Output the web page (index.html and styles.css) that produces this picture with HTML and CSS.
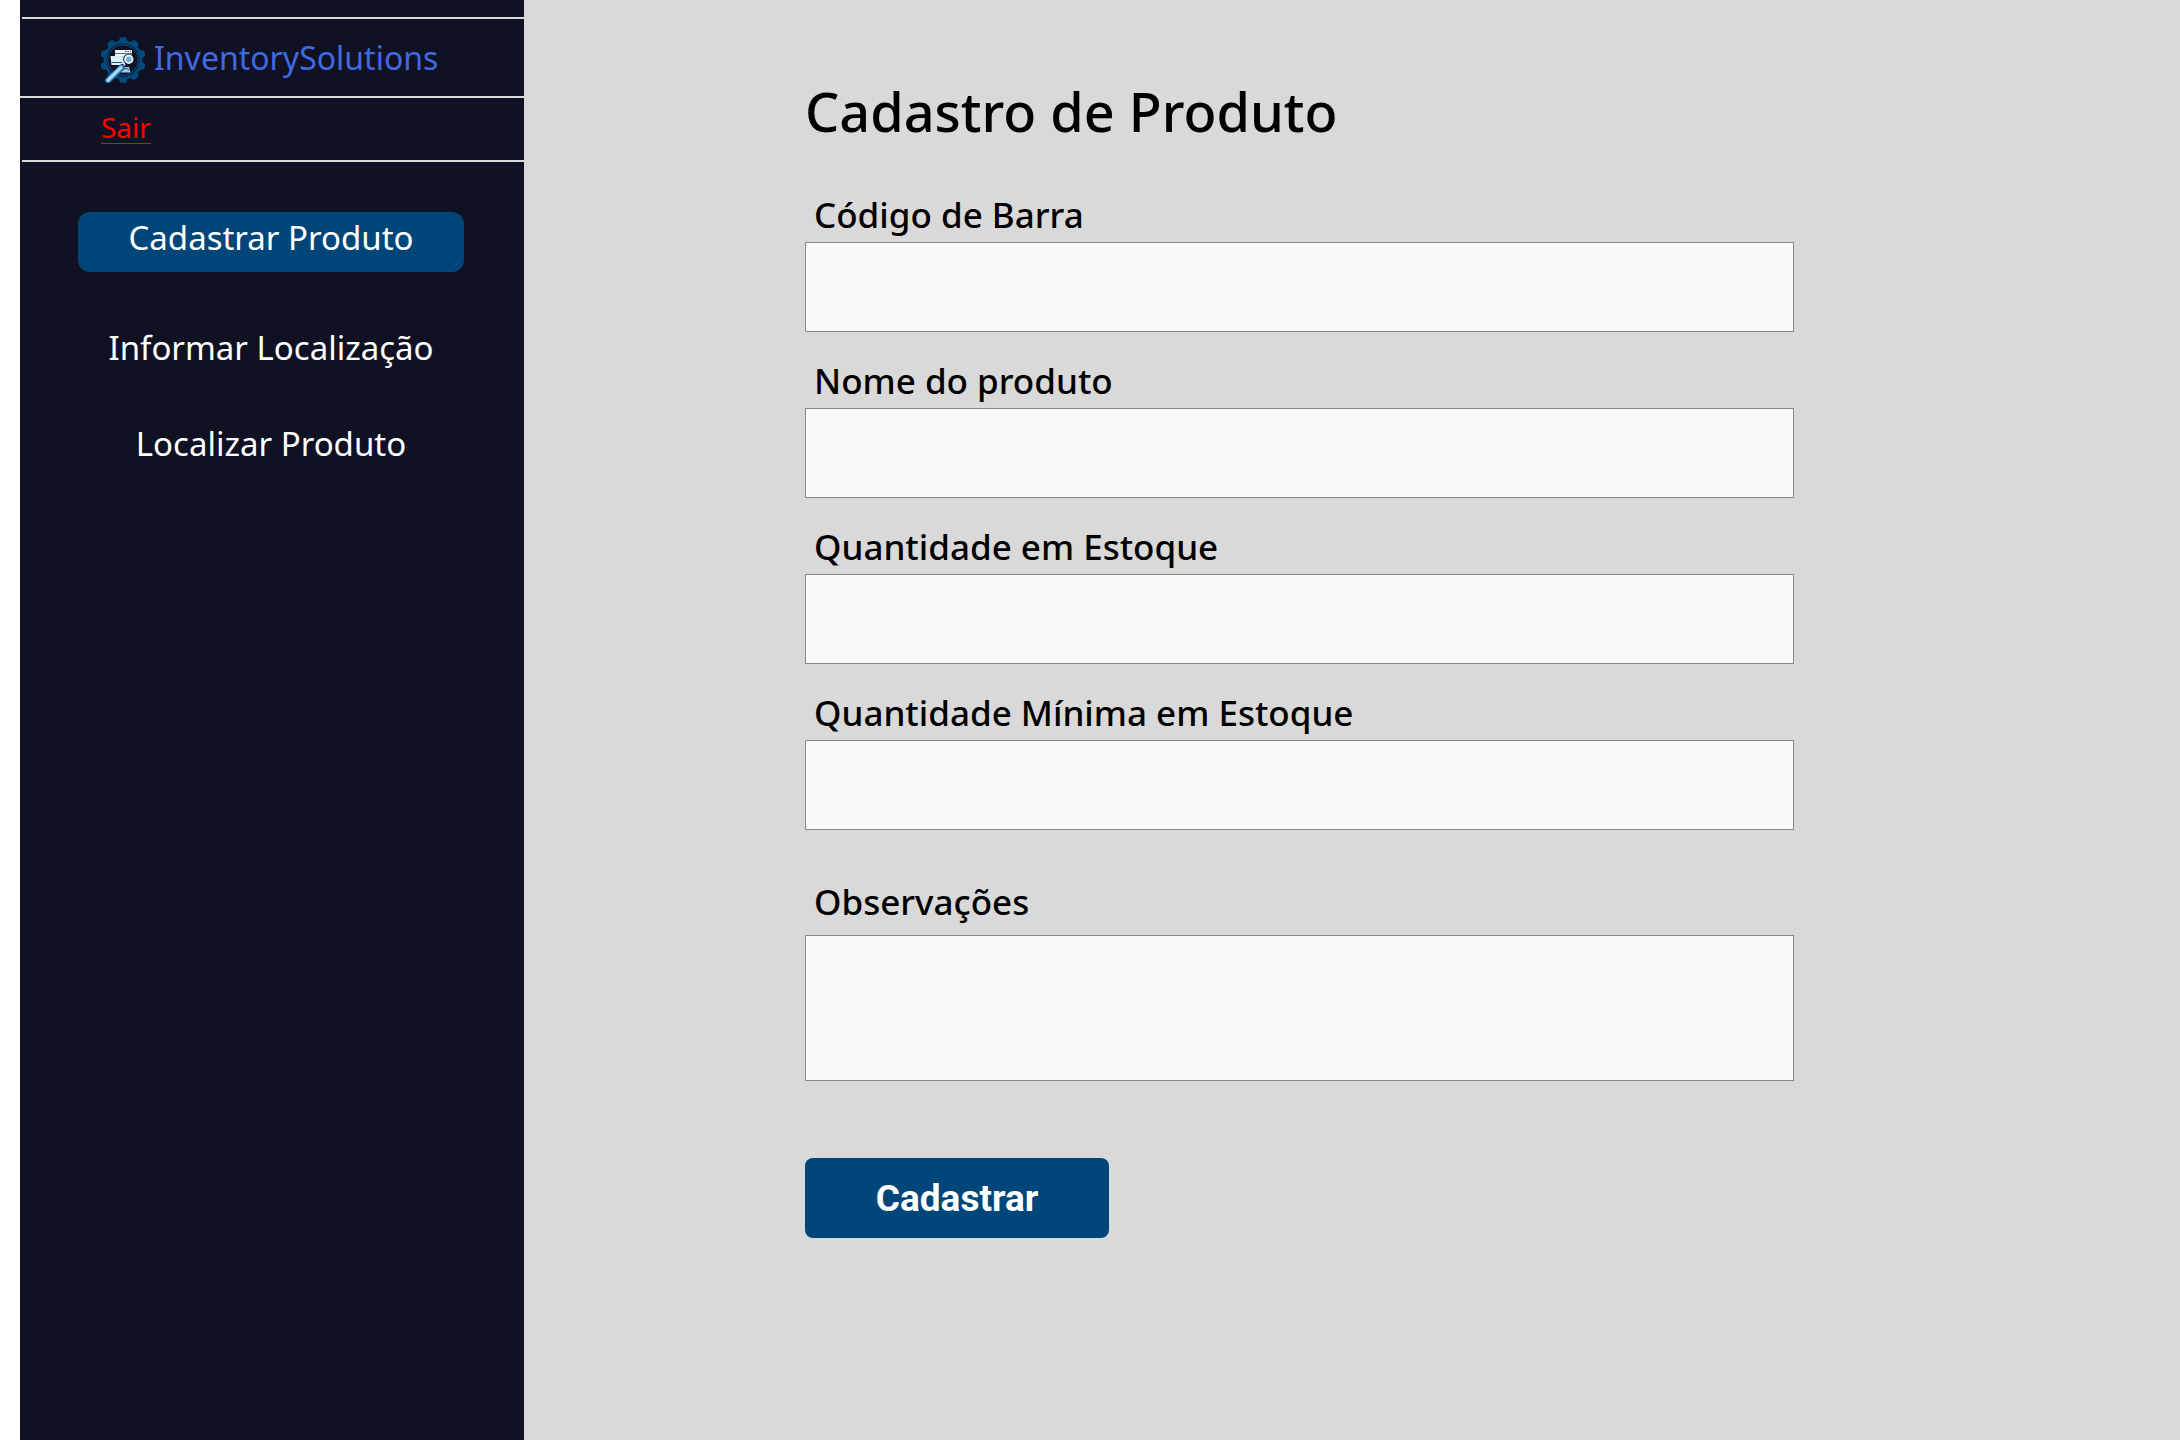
FILE: index.html
```html
<!DOCTYPE html>
<html lang="pt-BR">
<head>
  <meta charset="utf-8">
  <meta name="viewport" content="width=device-width, initial-scale=1">
  <title>InventorySolutions - Cadastro de Produto</title>
  <link rel="stylesheet" href="styles.css">
</head>
<body>
  <div class="layout">
    <aside class="sidebar">
      <hr class="rule rule-inset">
      <div class="brand">
        <svg class="brand-logo" viewBox="0 0 44 46" aria-hidden="true">
          <g fill="#004a7c">
            <circle cx="22" cy="23" r="19.5"/>
            <g id="teeth">
              <path id="tooth" d="M17.5 5 L19 .6 Q22 -.4 25 .6 L26.500 5Z"/>
              <use href="#tooth" transform="rotate(36 22 23)"/>
              <use href="#tooth" transform="rotate(72 22 23)"/>
              <use href="#tooth" transform="rotate(108 22 23)"/>
              <use href="#tooth" transform="rotate(144 22 23)"/>
              <use href="#tooth" transform="rotate(180 22 23)"/>
              <use href="#tooth" transform="rotate(216 22 23)"/>
              <use href="#tooth" transform="rotate(252 22 23)"/>
              <use href="#tooth" transform="rotate(288 22 23)"/>
              <use href="#tooth" transform="rotate(324 22 23)"/>
            </g>
          </g>
          <circle cx="22" cy="23" r="16.500" fill="#101122"/>
          <circle cx="22" cy="23" r="15.300" fill="none" stroke="#0b5288" stroke-width="1"/>
          <path d="M14 13H31V19H14Z" fill="#f2f8fc"/>
          <path d="M24 14.500h6" stroke="#24506f" stroke-width="1" stroke-dasharray="1.500 1"/>
          <path d="M14 16.500H31" stroke="#24506f" stroke-width=".8"/>
          <path d="M12 19H24V27H12Z" fill="#cfe6f6"/>
          <path d="M9.500 19H13L14 20.500H21L20 28H10.500Z" fill="#dceefa"/>
          <path d="M11 25.500H21" stroke="#24506f" stroke-width="1"/>
          <path d="M20 30H28L29.500 35.500H20Z" fill="#9fcdf0"/>
          <path d="M22 33L25 31L28 33" fill="none" stroke="#24506f" stroke-width="1"/>
          <circle cx="27.800" cy="22.300" r="5.600" fill="#101122"/>
          <circle cx="27.800" cy="22.300" r="3.800" fill="#7fb0d0" stroke="#eef7fd" stroke-width="1.800"/>
          <path d="M24 27L21.500 30" stroke="#cfe6f6" stroke-width="1.500"/>
          <path d="M20.500 30.500L7 43.500" stroke="#1d6aa5" stroke-width="6" stroke-linecap="round"/>
          <path d="M20 30.500L7 43.300" stroke="#a8d4f5" stroke-width="3.600" stroke-linecap="round"/>
        </svg>
        <span class="brand-name">InventorySolutions</span>
      </div>
      <hr class="rule">
      <div class="session">
        <a class="logout" href="#sair">Sair</a>
      </div>
      <hr class="rule rule-inset">
      <nav class="menu">
        <a class="menu-link menu-link-active" href="#cadastrar" aria-current="page">Cadastrar Produto</a>
        <a class="menu-link" href="#informar">Informar Localização</a>
        <a class="menu-link" href="#localizar">Localizar Produto</a>
      </nav>
    </aside>

    <main class="content">
      <h1 class="title">Cadastro de Produto</h1>
      <form class="form">
        <div class="field">
          <label class="label" for="codigo">Código de Barra</label>
          <input class="input" id="codigo" type="text">
        </div>
        <div class="field">
          <label class="label" for="nome">Nome do produto</label>
          <input class="input" id="nome" type="text">
        </div>
        <div class="field">
          <label class="label" for="quantidade">Quantidade em Estoque</label>
          <input class="input" id="quantidade" type="text">
        </div>
        <div class="field">
          <label class="label" for="minima">Quantidade Mínima em Estoque</label>
          <input class="input" id="minima" type="text">
        </div>
        <div class="field field-notes">
          <label class="label" for="observacoes">Observações</label>
          <textarea class="input input-notes" id="observacoes"></textarea>
        </div>
        <button class="submit" type="button">Cadastrar</button>
      </form>
    </main>
  </div>
</body>
</html>
```

FILE: styles.css
```css
* {
  box-sizing: border-box;
}

body {
  margin: 0;
  background: #ffffff;
  font-family: "Noto Sans", sans-serif;
}

.layout {
  display: flex;
  min-height: 100vh;
  padding-left: 20px;
}

/* Sidebar */
.sidebar {
  flex: 0 0 504px;
  padding-top: 17px;
  background: #101122;
}

.rule {
  height: 2px;
  margin: 0;
  border: 0;
  background: #d9d9d9;
}

.rule-inset {
  margin-left: 2px;
}

.brand {
  display: flex;
  align-items: center;
  gap: 9px;
  height: 77px;
  padding-left: 81px;
}

.brand-logo {
  width: 44px;
  height: 46px;
  margin-top: 4px;
}

.brand-name {
  color: #4169e1;
  font-size: 32px;
  line-height: 44px;
}

.session {
  padding: 10px 81px 14px;
  font-size: 28px;
  line-height: 38px;
}

.logout {
  display: block;
  width: fit-content;
  color: #ff0000;
  text-decoration-thickness: 1px;
  text-underline-offset: 5px;
}

.menu {
  display: flex;
  flex-direction: column;
  gap: 36px;
  padding: 50px 60px 50px 58px;
}

.menu-link {
  padding-bottom: 8px;
  border-radius: 12px;
  color: #ffffff;
  font-size: 33px;
  line-height: 52px;
  text-align: center;
  text-decoration: none;
}

.menu-link-active {
  margin-bottom: 14px;
  background: #004679;
}

/* Product form */
.content {
  flex: 1;
  padding: 74px 386px 74px 281px;
  background: #d9d9d9;
  color: #000000;
}

.title {
  margin: 0 0 43px;
  font-size: 54px;
  font-weight: 500;
  line-height: 74px;
}

.form {
  display: flex;
  flex-direction: column;
  gap: 25px;
}

.field {
  display: flex;
  flex-direction: column;
  gap: 4px;
}

.field-notes {
  gap: 10px;
  margin-top: 23px;
}

.label {
  padding-left: 9px;
  font-size: 35px;
  font-weight: 500;
  line-height: 47px;
}

.input {
  width: 100%;
  height: 90px;
  padding: 0 16px;
  border: 1px solid #888888;
  border-radius: 0;
  background: #fafafa;
  font: inherit;
  font-size: 35px;
}

.input-notes {
  height: 146px;
  padding: 16px;
  resize: none;
}

.submit {
  width: 304px;
  height: 80px;
  margin-top: 52px;
  border: 0;
  border-radius: 8px;
  background: #004679;
  color: #ffffff;
  font-family: Roboto, sans-serif;
  font-size: 37px;
  font-weight: 700;
}
```
